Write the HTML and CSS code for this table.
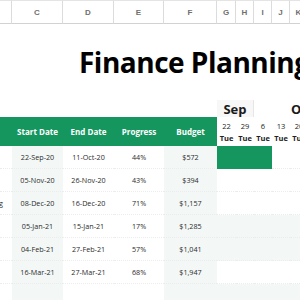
FILE: index.html
```html
<!DOCTYPE html>
<html>
<head>
<meta charset="utf-8">
<link rel="stylesheet" href="styles.css">
</head>
<body>
<div class="sheet">
  <div class="ch"></div>
  <div class="ch">C</div>
  <div class="ch">D</div>
  <div class="ch">E</div>
  <div class="ch">F</div>
  <div class="ch">G</div>
  <div class="ch">H</div>
  <div class="ch">I</div>
  <div class="ch">J</div>
  <div class="ch">K</div>
  <div class="ch"></div>

  <div class="title-row"><h1 class="title">Finance Planning</h1></div>

  <div class="month-blank"></div>
  <div class="month sep">Sep</div>
  <div class="month oct">Oct</div>

  <div class="th"></div>
  <div class="th">Start Date</div>
  <div class="th">End Date</div>
  <div class="th">Progress</div>
  <div class="th">Budget</div>
  <div class="gh"><span>22</span><b>Tue</b></div>
  <div class="gh"><span>29</span><b>Tue</b></div>
  <div class="gh"><span>6</span><b>Tue</b></div>
  <div class="gh"><span>13</span><b>Tue</b></div>
  <div class="gh"><span>20</span><b>Tue</b></div>
  <div class="gh"><span>27</span><b>Tue</b></div>

  <div class="td name"></div>
  <div class="td shade">22-Sep-20</div>
  <div class="td">11-Oct-20</div>
  <div class="td">44%</div>
  <div class="td shade">$572</div>
  <div class="gc bar"></div><div class="gc bar"></div><div class="gc bar"></div><div class="gc"></div><div class="gc"></div><div class="gc"></div>

  <div class="td name"></div>
  <div class="td shade">05-Nov-20</div>
  <div class="td">26-Nov-20</div>
  <div class="td">43%</div>
  <div class="td shade">$394</div>
  <div class="gc"></div><div class="gc"></div><div class="gc"></div><div class="gc"></div><div class="gc"></div><div class="gc"></div>

  <div class="td name"><span class="clip">Marketing</span></div>
  <div class="td shade">08-Dec-20</div>
  <div class="td">16-Dec-20</div>
  <div class="td">71%</div>
  <div class="td shade">$1,157</div>
  <div class="gc"></div><div class="gc"></div><div class="gc"></div><div class="gc"></div><div class="gc"></div><div class="gc"></div>

  <div class="td name"></div>
  <div class="td shade">05-Jan-21</div>
  <div class="td">15-Jan-21</div>
  <div class="td">17%</div>
  <div class="td shade">$1,285</div>
  <div class="gc shade"></div><div class="gc shade"></div><div class="gc shade"></div><div class="gc shade"></div><div class="gc shade"></div><div class="gc shade"></div>

  <div class="td name"></div>
  <div class="td shade">04-Feb-21</div>
  <div class="td">27-Feb-21</div>
  <div class="td">57%</div>
  <div class="td shade">$1,041</div>
  <div class="gc shade"></div><div class="gc shade"></div><div class="gc shade"></div><div class="gc shade"></div><div class="gc shade"></div><div class="gc shade"></div>

  <div class="td name"></div>
  <div class="td shade">16-Mar-21</div>
  <div class="td">27-Mar-21</div>
  <div class="td">68%</div>
  <div class="td shade">$1,947</div>
  <div class="gc"></div><div class="gc"></div><div class="gc"></div><div class="gc"></div><div class="gc"></div><div class="gc"></div>

  <div class="td name"></div>
  <div class="td shade"></div>
  <div class="td"></div>
  <div class="td"></div>
  <div class="td shade"></div>
  <div class="gc shade"></div><div class="gc shade"></div><div class="gc shade"></div><div class="gc shade"></div><div class="gc shade"></div><div class="gc shade"></div>
</div>
</body>
</html>
```

FILE: styles.css
```css
html, body {
  margin: 0;
  padding: 0;
  background: #ffffff;
}
body {
  width: 300px;
  height: 300px;
  overflow: hidden;
  font-family: "Open Sans", "Noto Sans", sans-serif;
  color: #2b2b2b;
}
.sheet {
  display: grid;
  grid-template-columns: 12px 51px 51px 50px 53px 19px 18px 18px 18px 18px 18px;
  grid-template-rows: 24px 76px 17px 29px repeat(7, 23px);
  width: 356px;
}
.ch {
  border-top: 1px solid #e4e4e4;
  border-bottom: 1px solid #d2d2d2;
  border-right: 1px solid #dcdcdc;
  font-size: 8px;
  font-weight: 600;
  color: #6f6f6f;
  display: flex;
  align-items: center;
  justify-content: center;
  font-family: "Liberation Sans", Arial, sans-serif;
}
.title-row {
  grid-column: 1 / -1;
  display: flex;
  align-items: center;
  padding-left: 79px;
}
.title {
  margin: 0;
  font-size: 28px;
  font-weight: 700;
  color: #000000;
  white-space: nowrap;
  letter-spacing: -0.5px;
}
.month-blank {
  grid-column: 1 / 6;
}
.month {
  font-size: 13px;
  font-weight: 700;
  color: #1a1a1a;
  display: flex;
  align-items: center;
}
.sep {
  grid-column: 6 / 8;
  justify-content: center;
  background: #f7f7f7;
  border-right: 1px solid #e6e6e6;
}
.oct {
  grid-column: 8 / 12;
  padding-left: 37px;
}
.th {
  background: #16965f;
  color: #ffffff;
  font-size: 8px;
  font-weight: 700;
  display: flex;
  align-items: center;
  justify-content: center;
  white-space: nowrap;
}
.gh {
  display: flex;
  flex-direction: column;
  align-items: center;
  justify-content: center;
  gap: 2px;
  font-size: 7.5px;
  color: #222222;
}
.gh b {
  font-weight: 700;
}
.td {
  font-size: 7.2px;
  display: flex;
  align-items: center;
  justify-content: center;
  white-space: nowrap;
  border-bottom: 1px dotted #ececec;
}
.gc {
  border-bottom: 1px dotted #ececec;
}
.shade {
  background: #f3f8f7;
}
.bar {
  background: #16965f;
  border-bottom-color: #16965f;
}
.name {
  justify-content: flex-end;
  overflow: hidden;
  padding-right: 9px;
}
.clip {
  flex-shrink: 0;
}
```
